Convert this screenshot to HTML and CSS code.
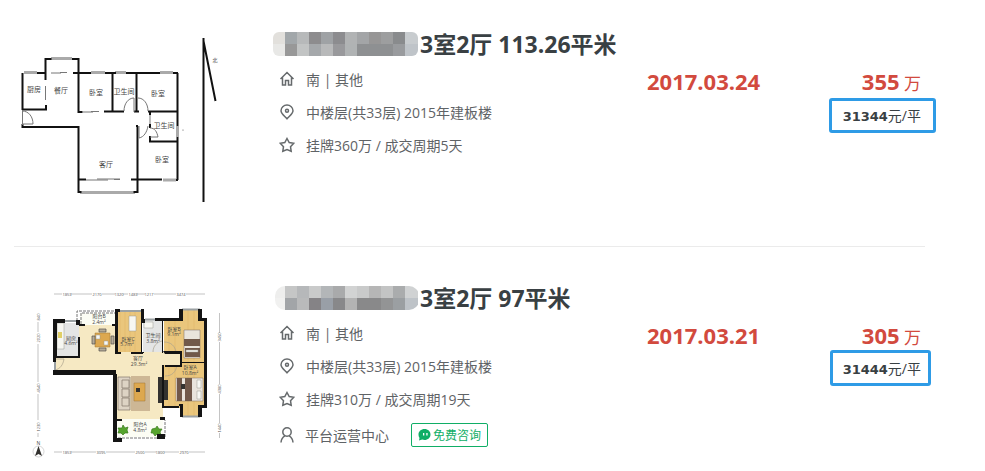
FILE: index.html
```html
<!DOCTYPE html>
<html lang="zh-CN">
<head>
    <meta charset="UTF-8">
    <meta name="viewport" content="width=device-width, initial-scale=1.0">
    <title>成交房源</title>
    <link rel="stylesheet" href="styles.css">
</head>
<body>

<!-- Shared icons -->
<svg class="sprite" width="0" height="0" aria-hidden="true">
    <symbol id="icon-home" viewBox="0 0 16 16">
        <path d="M1.5 8 8 1.5 14.5 8M3.500 6.500V14H6.500V9.500H9.500V14H12.500V6.500"/>
    </symbol>
    <symbol id="icon-pin" viewBox="0 0 16 16">
        <path d="M8 14.800C5 11.500 2 9.500 2 6.700a6 5.700 0 0 1 12 0c0 2.800-3 4.800-6 8.100z"/>
        <circle class="dot" cx="8" cy="6.700" r="1.500"/>
    </symbol>
    <symbol id="icon-star" viewBox="0 0 16 16">
        <path d="M8 1.500l2.200 4 4.500.8-3.200 3.400.7 4.600L8 12.500l-4.200 1.800.7-4.600L1.300 6.300l4.500-.8z"/>
    </symbol>
    <symbol id="icon-user" viewBox="0 0 16 16">
        <circle cx="8" cy="5" r="4.200"/>
        <path d="M2 15.500c.2-3.500 1.600-5.400 4-6.700M14 15.500c-.2-3.500-1.600-5.400-4-6.700"/>
    </symbol>
</svg>

<ul class="house-list">

    <!-- First house -->
    <li class="house">
        <svg class="plan plan-line" viewBox="14 28 240 185" role="img" aria-label="户型图">
            <path class="window" d="M51 58.500h21M24 72.500h13M91 72.500h14M115 72.500h11M160 72.500h13M177.500 126v11M163 180h13M80 192.500h55"/>
            <path class="wall" d="M45.500 80V59h6M72 59h6.500v53h4M22.500 110V73M37 73h8.500M22 109.500h24V105M73 73h18M105 73h11M126 73h34M173 73h5M112.500 73v38.500M104 111.500h20M136.500 73v39M134 111.500h5M148 111.500h30M177.500 73v53M177.500 137v43M149 141.500h28M150 136v5M150 112v3M150 124v4M22.500 124v3h56v65h3M78 179.500h8M136 126h2M137.500 126v66h-4M131 179.500h31M176 180h2"/>
            <path class="thin" d="M51 73h10M60 72.500h7M45.500 86v14M82 112h11M91 111.500h8M86 180h22M97 179h23M114 179.500h6M150 115v9M22.500 110v15M22 111c7 0 11 6 11 13H23M124 111c0-7 4-13 10-13v14M138 98c6 0 10 6 10 13M139 126v12c5-1 8-6 9-12M150 128c5 0 7 4 8 9h-8"/>
            <path class="north" d="M203.500 38v164M203.500 41l12 60"/>
            <text x="34" y="92">厨房</text>
            <text x="61" y="93">餐厅</text>
            <text x="96" y="95">卧室</text>
            <text x="124" y="94">卫生间</text>
            <text x="158" y="96">卧室</text>
            <text x="164" y="128">卫生间</text>
            <text x="162" y="162">卧室</text>
            <text x="106" y="167">客厅</text>
            <text class="small" x="215" y="62">北</text>
            <circle cx="183" cy="130" r=".6"/>
        </svg>

        <div class="info">
            <h2 class="title">
                <svg class="mosaic" viewBox="0 0 145 24" aria-hidden="true">
                    <clipPath id="mask-a"><rect width="145" height="24" rx="6"/></clipPath>
                    <g clip-path="url(#mask-a)">
                        <path fill="#e2e0dc" d="M0 0h12v12H0z"/><path fill="#a2a7aa" d="M12 0h12v12H12z"/>
                        <path fill="#b7b9ba" d="M24 0h12v12H24z"/><path fill="#8d8c8e" d="M36 0h12v12H36z"/>
                        <path fill="#9fa2a5" d="M48 0h12v12H48z"/><path fill="#8c8c8f" d="M60 0h12v12H60z"/>
                        <path fill="#b1b3b4" d="M72 0h12v12H72z"/><path fill="#a3a5a7" d="M84 0h12v12H84z"/>
                        <path fill="#979696" d="M96 0h12v12H96z"/><path fill="#9d9e9f" d="M108 0h12v12h-12z"/>
                        <path fill="#898b8d" d="M120 0h12v12h-12z"/><path fill="#c8cccf" d="M132 0h13v12h-13z"/>
                        <path fill="#e8e8e6" d="M0 12h12v12H0z"/><path fill="#989898" d="M12 12h12v12H12z"/>
                        <path fill="#c2c4c4" d="M24 12h12v12H24z"/><path fill="#a5a8ab" d="M36 12h12v12H36z"/>
                        <path fill="#b8b9ba" d="M48 12h12v12H48z"/><path fill="#99999c" d="M60 12h12v12H60z"/>
                        <path fill="#b0b3b4" d="M72 12h12v12H72z"/><path fill="#8e9092" d="M84 12h36v12H84z"/>
                        <path fill="#999b9e" d="M120 12h12v12h-12z"/><path fill="#bfc4c9" d="M132 12h13v12h-13z"/>
                    </g>
                </svg>
                <a href="#">3室2厅 113.26平米</a>
            </h2>
            <div class="row"><svg class="icon"><use href="#icon-home"/></svg>南 | 其他</div>
            <div class="row"><svg class="icon"><use href="#icon-pin"/></svg>中楼层(共33层) 2015年建板楼</div>
            <div class="row"><svg class="icon"><use href="#icon-star"/></svg>挂牌360万 / 成交周期5天</div>
        </div>

        <div class="date">2017.03.24</div>

        <div class="price">
            <div class="total"><b>355</b> 万</div>
            <div class="unit"><b>31344</b>元/平</div>
        </div>
    </li>

    <!-- Second house -->
    <li class="house">
        <svg class="plan plan-color" viewBox="14 282 240 185" role="img" aria-label="户型图">
            <!-- floors -->
            <path class="cream" d="M55 357h24v-32h37v27h65v13h-18v54h-47v-45H55z"/>
            <path class="tile" d="M56 323h23v33H56zM143 320h20v32h-20z"/>
            <path class="balcony" d="M80 313h36v12H80zM117 419h46v18h-46z"/>
            <path class="wood" d="M116 312h26v40h-26zM164 320h18v-10h19v10h3v41h-23v-9h-17zM164 365h17v-4h23v47h-3v8h-19v-8h-18z"/>
            <path class="grain" d="M120 312v40M125 312v40M130 312v40M135 312v40M169 320v32M175 320v32M188 310v50M194 310v50M169 365v43M175 365v43M188 361v55M194 361v55"/>
            <path class="dashed" d="M77 321v-10h38M81 324V313h34M118 438h47v-18"/>
            <path class="window" d="M65 321h11M120 311h21M145 319.500h10M182 309.500h18M182 416.500h18M55 360v10"/>

            <!-- furniture -->
            <path class="fixture" d="M57 323h7v26h-7zM144 322h9v6h-9zM129 316h7v15h-7z"/>
            <path class="yellow" d="M58 332h4v6h-4z"/>
            <path class="sofa" d="M118 377h12v33h-12zM122 380h7v8h-7zM122 389h7v8h-7zM122 398h7v8h-7z"/>
            <path class="rug" d="M131 376h19v35h-19z"/>
            <path class="table" d="M134 383h11v18h-11zM95 333h15v14H95z"/>
            <path class="chair" d="M99 329h7v3h-7zM99 348h7v3h-7zM92 336h3v8h-3zM111 336h3v8h-3z"/>
            <path class="dark" d="M158 377h4v26h-4zM164 380h4v20h-4zM136 388h4v4h-4z"/>
            <path class="fixture" d="M96 335h4v4h-4zM104 341h4v4h-4z"/>
            <path class="bed" d="M184 330h16v28h-16zM176 378h27v23h-27z"/>
            <path class="brown" d="M184 339h16v7h-16zM185 348h15v9h-15zM177 378h5v23h-5zM185 378h7v23h-7z"/>
            <path class="fixture" d="M186 350h12v2h-12zM197 380h4v8h-4zM197 391h4v8h-4z"/>
            <path class="dark" d="M181 384h4v5h-4z"/>
            <path class="plant" d="M118 428l4 0 1-3 2 3 3-1-1 3 1 3-3 0-2 2-2-2-3 0 1-3zM152 429l4-1 1-2 2 3 3 0-2 3 1 3-4-1-2 2-2-3-2 0z"/>
            <path class="swing" d="M55 359h9c-1 6-4 10-9 11M153 352c0-6 4-10 9-11M164 342c7 0 11 4 12 10M165 376c7 0 11-4 12-11"/>

            <!-- walls -->
            <path class="block" d="M53 319h12v4h-8v33h23v2H53zM76 320h4v5h-4zM78 337h2v20h-2zM53 370h63v5H53zM113 374h4v45h5v2h-5v17h5v4h-9zM53 356h3v6h-3zM79 324h6v2h-6zM112 324h5v2h-5zM115 309h5v3h-2v40h3v2h-6zM141 309h3v10h1v4h-3v29h2v1h-3zM155 318h24v-9h4v12h-20v32h-1v-32h-7zM163 351h19v11h22v-41h-6v-12h4v9h5v90h-5v9h-4v-12h6v-42h-22v4h-17v-2h15v-11h-15zM162 365h2v41h16v11h3v-13h-4v4h-17zM160 417h5v3h-5zM157 434h8v5h-8zM131 352h12v2h-12z"/>

            <!-- dimensions -->
            <path class="measure" d="M54 294h8M71 294h21M102 294h13M123 294h5M137 294h8M154 294h22M186 294h19M54 452h8M71 452h25M106 452h29M145 452h11M164 452h15M189 452h16M38 322v10M38 344v38M38 394v26M38 433v4M219.500 313v20M219.500 342v42M219.500 394v29M219.500 433v5"/>
            <g class="num">
                <text x="67" y="296">1853</text><text x="97" y="296">2170</text><text x="119" y="296">1320</text><text x="133" y="296">1483</text><text x="149" y="296">1217</text><text x="181" y="296">3474</text>
                <text x="67" y="454">1853</text><text x="101" y="454">3095</text><text x="140" y="454">2500</text><text x="160" y="454">1800</text><text x="184" y="454">2970</text>
                <text transform="translate(40 317) rotate(-90)">840</text>
                <text transform="translate(40 338) rotate(-90)">2020</text>
                <text transform="translate(40 388) rotate(-90)">4540</text>
                <text transform="translate(40 427) rotate(-90)">1230</text>
                <text transform="translate(221 337) rotate(-90)">3450</text>
                <text transform="translate(221 389) rotate(-90)">4380</text>
                <text transform="translate(221 428) rotate(-90)">1440</text>
            </g>

            <!-- room names -->
            <text x="99" y="318">阳台B</text><text x="99" y="324">2.4m²</text>
            <text x="71" y="340">厨房</text><text x="71" y="345">4.6m²</text>
            <text x="128" y="341">卧室C</text><text x="127" y="346">5.7m²</text>
            <text x="153" y="337">卫生间</text><text x="153" y="343">3.8m²</text>
            <text x="174" y="331">卧室B</text><text x="174" y="336">9.1m²</text>
            <text x="138" y="360">客厅</text><text x="139" y="366">29.3m²</text>
            <text x="190" y="369">卧室A</text><text x="190" y="375">10.8m²</text>
            <text x="140" y="426">阳台A</text><text x="140" y="432">4.8m²</text>

            <!-- compass -->
            <circle class="ring" cx="38.500" cy="451.500" r="5.500"/>
            <path class="dark" d="M38.500 446l3.500 10-3.500-2-3.500 2z"/>
            <text x="38.500" y="445">N</text>
        </svg>

        <div class="info">
            <h2 class="title">
                <svg class="mosaic" viewBox="0 0 145 24" aria-hidden="true">
                    <clipPath id="mask-b"><rect x="2" width="144" height="24" rx="10"/></clipPath>
                    <g clip-path="url(#mask-b)">
                        <path fill="#eeeeed" d="M0 0h12v12H0z"/><path fill="#c5c6c6" d="M12 0h12v12H12z"/>
                        <path fill="#b6b8ba" d="M24 0h12v12H24z"/><path fill="#c9caca" d="M36 0h12v12H36z"/>
                        <path fill="#b3b6b8" d="M48 0h12v12H48z"/><path fill="#a9aaab" d="M60 0h12v12H60z"/>
                        <path fill="#d2d3d3" d="M72 0h12v12H72z"/><path fill="#c9caca" d="M84 0h12v12H84z"/>
                        <path fill="#b6b6b6" d="M96 0h12v12H96z"/><path fill="#c3c4c4" d="M108 0h12v12h-12z"/>
                        <path fill="#aaacad" d="M120 0h12v12h-12z"/><path fill="#d0d2d3" d="M132 0h14v12h-14z"/>
                        <path fill="#f1f1f0" d="M0 12h12v12H0z"/><path fill="#a2a5a8" d="M12 12h12v12H12z"/>
                        <path fill="#b9babb" d="M24 12h12v12H24z"/><path fill="#858386" d="M36 12h12v12H36z"/>
                        <path fill="#999fa7" d="M48 12h12v12H48z"/><path fill="#88888a" d="M60 12h12v12H60z"/>
                        <path fill="#b3b3b3" d="M72 12h12v12H72z"/><path fill="#89898a" d="M84 12h24v12H84z"/>
                        <path fill="#939495" d="M108 12h12v12h-12z"/><path fill="#9b9fa2" d="M120 12h12v12h-12z"/>
                        <path fill="#bec3c8" d="M132 12h14v12h-14z"/>
                    </g>
                </svg>
                <a href="#">3室2厅 97平米</a>
            </h2>
            <div class="row"><svg class="icon"><use href="#icon-home"/></svg>南 | 其他</div>
            <div class="row"><svg class="icon"><use href="#icon-pin"/></svg>中楼层(共33层) 2015年建板楼</div>
            <div class="row"><svg class="icon"><use href="#icon-star"/></svg>挂牌310万 / 成交周期19天</div>
            <div class="row agent">
                <svg class="icon"><use href="#icon-user"/></svg>平台运营中心
                <button class="chat" type="button">
                    <svg class="bubble" viewBox="0 0 13 12" aria-hidden="true">
                        <path fill="#10ae66" d="M6.500 0C10 0 12.500 2.400 12.500 5.500S10 11 6.500 11c-.8 0-1.600-.1-2.300-.4L1 11.500l.5-2.600A5.300 5.300 0 0 1 .5 5.500C.5 2.400 3 0 6.500 0z"/>
                        <path fill="#fff" d="M5 4h1.300v2.500H5zM8.300 4h1.300v2.500H8.300z"/>
                    </svg>
                    免费咨询
                </button>
            </div>
        </div>

        <div class="date">2017.03.21</div>

        <div class="price">
            <div class="total"><b>305</b> 万</div>
            <div class="unit unit-narrow"><b>31444</b>元/平</div>
        </div>
    </li>

</ul>

</body>
</html>
```
FILE: styles.css
```css
body {
    margin: 0;
    background-color: #fff;
    color: #5f6366;
    font-family: "Open Sans", "Noto Sans CJK SC", sans-serif;
    font-size: 14px;
}

.sprite {
    display: block;
}

.house-list {
    list-style: none;
    margin: 0 60px 0 14px;
    padding: 0;
}

/* House row */
.house {
    display: grid;
    grid-template-columns: 240px 1fr 181px 93px;
    padding: 28px 4px 33px 0;
    margin-bottom: 7px;
    border-bottom: 1px solid #ebebeb;
}

.house:last-child {
    padding-bottom: 0;
    margin-bottom: 0;
    border-bottom: none;
}

/* Title and details */
.info {
    padding-left: 19px;
}

.title {
    display: flex;
    align-items: center;
    gap: 2px;
    height: 32px;
    margin: 0 0 2px;
    font-size: 23px;
    line-height: 30px;
    white-space: nowrap;
}

.title a {
    color: #394043;
    text-decoration: none;
}

.mosaic {
    width: 145px;
    height: 24px;
    flex: none;
}

.row {
    display: flex;
    align-items: center;
    height: 33px;
    padding-left: 6px;
    white-space: nowrap;
}

.icon {
    width: 16px;
    height: 16px;
    margin-right: 11px;
    fill: none;
    stroke: #666a6c;
    stroke-width: 1.5;
}

.icon .dot {
    fill: #666a6c;
    stroke: none;
}

.agent {
    margin-top: 3px;
}

.agent .icon {
    margin-right: 10px;
}

.chat {
    display: flex;
    align-items: center;
    gap: 2px;
    height: 24px;
    margin-left: 22px;
    padding: 0 6px;
    border: 1px solid #10ae66;
    border-radius: 2px;
    background-color: #fff;
    color: #10ae66;
    font-family: inherit;
    font-size: 12px;
    cursor: pointer;
}

.bubble {
    width: 13px;
    height: 12px;
}

/* Date and price */
.date,
.total {
    padding-top: 39px;
    color: #d24a3e;
    font-size: 22px;
    line-height: 28px;
    white-space: nowrap;
}

.date {
    font-weight: bold;
}

.price {
    display: flex;
    flex-direction: column;
    align-items: flex-end;
}

.total {
    font-size: 17px;
}

.total b {
    font-size: 22px;
}

.unit {
    height: 29px;
    margin-right: -15px;
    padding: 0 12px 0 11px;
    border: 3px solid #2e9be6;
    border-radius: 3px;
    color: #394043;
    line-height: 29px;
    white-space: nowrap;
}

.unit b {
    font-family: "DejaVu Sans", sans-serif;
    font-size: 13px;
}

.unit-narrow {
    margin-top: -2px;
    margin-right: -10px;
    padding: 1px 7px 0 10px;
}

/* Floor plans */
.plan {
    display: block;
    width: 240px;
    height: 185px;
    fill: none;
}

.plan text {
    fill: #444;
    font-size: 7px;
    text-anchor: middle;
}

.plan .small {
    font-size: 5px;
}

.plan-line .wall {
    stroke: #111;
    stroke-width: 2;
}

.plan-line .window {
    stroke: #aaa;
    stroke-width: 3;
}

.plan-line .thin {
    stroke: #777;
}

.plan-line .north {
    stroke: #111;
    stroke-width: 2;
}

.plan-line circle {
    fill: #555;
}

.plan-color text {
    font-size: 5px;
}

.plan-color .num text {
    fill: #555;
    font-size: 4px;
}

.plan-color .cream {
    fill: #f6e9c3;
}

.plan-color .tile {
    fill: #e4e5e5;
}

.plan-color .balcony {
    fill: #fcfdf4;
}

.plan-color .wood {
    fill: #eac67c;
}

.plan-color .grain {
    stroke: #dfb364;
    stroke-width: .5;
}

.plan-color .dashed {
    stroke: #777;
    stroke-dasharray: 3 1;
}

.plan-color .window {
    stroke: #9ba1a3;
    stroke-width: 2;
}

.plan-color .fixture {
    fill: #f7f7f2;
    stroke: #9b9b91;
    stroke-width: .5;
}

.plan-color .yellow {
    fill: #e0cf66;
}

.plan-color .sofa {
    fill: #ddd3c4;
    stroke: #82776c;
    stroke-width: .7;
}

.plan-color .rug {
    fill: #cdb795;
}

.plan-color .table {
    fill: #dda84f;
    stroke: #9d7437;
    stroke-width: .5;
}

.plan-color .chair {
    fill: #b5ab98;
    stroke: #55504a;
    stroke-width: .7;
}

.plan-color .dark {
    fill: #33322f;
}

.plan-color .bed {
    fill: #e9e4dc;
    stroke: #796b60;
    stroke-width: .5;
}

.plan-color .brown {
    fill: #71594a;
}

.plan-color .plant {
    fill: #56a42d;
    stroke: #397b1c;
    stroke-width: .7;
}

.plan-color .swing {
    stroke: #aaa28c;
    stroke-width: .7;
}

.plan-color .block {
    fill: #141414;
}

.plan-color .measure {
    stroke: #aaa;
    stroke-width: .7;
}

.plan-color .ring {
    stroke: #aaa;
    stroke-width: .5;
}
```
